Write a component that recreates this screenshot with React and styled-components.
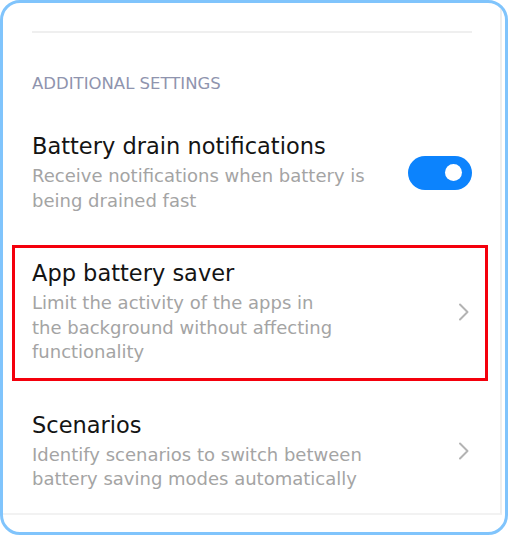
import React from 'react';
import styled, { createGlobalStyle } from 'styled-components';

const GlobalStyle = createGlobalStyle`
  html, body {
    margin: 0;
    padding: 0;
    background: #fff;
  }
  body {
    font-family: 'DejaVu Sans', 'Noto Sans', sans-serif;
    -webkit-font-smoothing: antialiased;
  }
`;

const Frame = styled.div`
  box-sizing: border-box;
  width: 508px;
  height: 535px;
  border: 3px solid #80c4fc;
  border-radius: 20px;
  overflow: hidden;
  background: #fff;
`;

const Panel = styled.div`
  box-sizing: border-box;
  width: 499px;
  height: 512px;
  border-right: 2px solid #eeeeee;
  border-bottom: 2px solid #f2f2f2;
  padding-top: 28px;
`;

const Divider = styled.div`
  height: 2px;
  margin: 0 28px 0 29px;
  background: #efefef;
`;

const SectionHeader = styled.div`
  margin: 41px 0 0 29px;
  font-size: 16.5px;
  line-height: 20px;
  color: #8f94ae;
`;

const Row = styled.div`
  display: flex;
  align-items: center;
  gap: 20px;
  padding: ${(p) => p.$pad || '0'};
`;

const Texts = styled.div`
  flex: 1;
  display: flex;
  flex-direction: column;
  gap: 4px;
`;

const Title = styled.div`
  font-size: 22.5px;
  line-height: 28px;
  color: #141414;
`;

const Subtitle = styled.div`
  font-size: 18px;
  line-height: 24.5px;
  color: #a4a4a4;
  max-width: ${(p) => p.$max || 345}px;
`;

const Highlight = styled.div`
  margin: 32px 12px 0 9px;
  border: 3px solid #f4000c;
`;

const Toggle = styled.div`
  box-sizing: border-box;
  width: 64px;
  height: 34px;
  border-radius: 17px;
  background: #0c83fd;
  display: flex;
  align-items: center;
  justify-content: flex-end;
  padding-right: 10px;
  flex-shrink: 0;
`;

const Knob = styled.div`
  width: 17px;
  height: 17px;
  border-radius: 50%;
  background: #fff;
`;

const Chevron = () => (
  <svg width="12" height="18" viewBox="0 0 12 18" style={{ flexShrink: 0, marginRight: 2 }}>
    <path d="M2 1.5 L9.5 9 L2 16.5" fill="none" stroke="#b3b3b3" strokeWidth="2" strokeLinecap="round" strokeLinejoin="round" />
  </svg>
);

export default function App() {
  return (
    <>
      <GlobalStyle />
      <Frame>
        <Panel>
          <Divider />
          <SectionHeader>ADDITIONAL SETTINGS</SectionHeader>
          <Row $pad="38px 28px 0 29px">
            <Texts>
              <Title>Battery drain notifications</Title>
              <Subtitle $max={350}>Receive notifications when battery is being drained fast</Subtitle>
            </Texts>
            <Toggle>
              <Knob />
            </Toggle>
          </Row>
          <Highlight>
            <Row $pad="11px 13px 13px 17px">
              <Texts>
                <Title>App battery saver</Title>
                <Subtitle $max={312}>Limit the activity of the apps in the background without affecting functionality</Subtitle>
              </Texts>
              <Chevron />
            </Row>
          </Highlight>
          <Row $pad="30px 28px 0 29px">
            <Texts>
              <Title>Scenarios</Title>
              <Subtitle $max={350}>Identify scenarios to switch between battery saving modes automatically</Subtitle>
            </Texts>
            <Chevron />
          </Row>
        </Panel>
      </Frame>
    </>
  );
}
